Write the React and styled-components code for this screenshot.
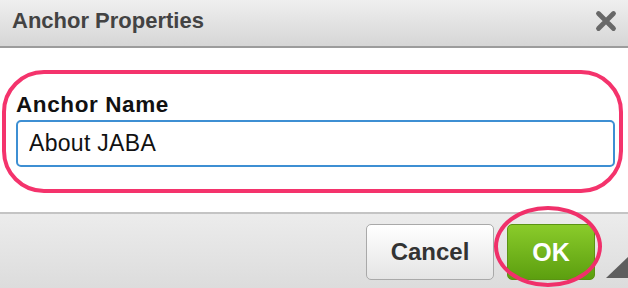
import React from "react";
import styled, { createGlobalStyle } from "styled-components";

const Global = createGlobalStyle`
  html, body {
    margin: 0;
    padding: 0;
    background: #fff;
  }
  body {
    font-family: "Liberation Sans", Arial, sans-serif;
  }
`;

const Dialog = styled.div`
  width: 628px;
  height: 288px;
  display: flex;
  flex-direction: column;
  overflow: hidden;
  position: relative;
  background: #fff;
`;

const Header = styled.div`
  height: 48px;
  flex-shrink: 0;
  display: flex;
  align-items: center;
  justify-content: space-between;
  padding: 0 10px 4px 12px;
  box-sizing: border-box;
  background: linear-gradient(#efefef, #d6d6d6);
  border-bottom: 2px solid #9c9c9c;
`;

const Title = styled.h1`
  margin: 0;
  font-size: 22px;
  font-weight: bold;
  color: #434343;
`;

const Close = styled.button`
  border: none;
  background: none;
  padding: 0;
  width: 24px;
  height: 24px;
  display: flex;
  align-items: center;
  justify-content: center;
  cursor: pointer;
`;

const Body = styled.div`
  flex: 1;
  padding: 22px 5px 17px 2px;
`;

const Highlight = styled.div`
  border: 4px solid #f4336c;
  border-radius: 42px;
  padding: 18px 4px 22px 10px;
`;

const Label = styled.label`
  display: block;
  font-size: 22.5px;
  line-height: 26px;
  font-weight: bold;
  letter-spacing: 0.6px;
  color: #111;
  margin-bottom: 2px;
`;

const Input = styled.input`
  display: block;
  width: 100%;
  height: 47px;
  box-sizing: border-box;
  border: 2px solid #3d8fd3;
  border-radius: 5px;
  padding: 0 11px;
  font-family: "Liberation Sans", Arial, sans-serif;
  font-size: 23px;
  letter-spacing: 0.3px;
  color: #111;
  outline: none;
`;

const Footer = styled.div`
  height: 76px;
  flex-shrink: 0;
  box-sizing: border-box;
  border-top: 2px solid #c4c4c4;
  background: linear-gradient(#ececec, #dcdcdc);
  display: flex;
  justify-content: flex-end;
  align-items: flex-start;
  gap: 13px;
  padding: 10px 33px 0 0;
`;

const Button = styled.button`
  height: 56px;
  width: ${(p) => p.$w}px;
  box-sizing: border-box;
  border-radius: 5px;
  font-family: "Liberation Sans", Arial, sans-serif;
  font-size: ${(p) => (p.$primary ? 25 : 24)}px;
  font-weight: bold;
  cursor: pointer;
  position: relative;
  color: ${(p) => (p.$primary ? "#fff" : "#333")};
  border: 1px solid ${(p) => (p.$primary ? "#5b9314" : "#a9a9a9")};
  background: ${(p) =>
    p.$primary
      ? "linear-gradient(#8acb2a, #5c9f0f)"
      : "linear-gradient(#ffffff, #e4e4e4)"};
`;

const Circle = styled.span`
  position: absolute;
  left: -14px;
  top: -19px;
  width: 108px;
  height: 81px;
  box-sizing: border-box;
  border: 4px solid #f0306a;
  border-radius: 50%;
  pointer-events: none;
`;

const Grip = styled.svg`
  position: absolute;
  right: 0;
  bottom: 10px;
`;

export default function App() {
  return (
    <>
      <Global />
      <Dialog>
        <Header>
          <Title>Anchor Properties</Title>
          <Close aria-label="Close">
            <svg width="22" height="22" viewBox="0 0 22 22">
              <path
                d="M3.5 3.5 L18.5 18.5 M18.5 3.5 L3.5 18.5"
                stroke="#686868"
                strokeWidth="4.8"
                strokeLinecap="round"
              />
            </svg>
          </Close>
        </Header>
        <Body>
          <Highlight>
            <Label>Anchor Name</Label>
            <Input defaultValue="About JABA" />
          </Highlight>
        </Body>
        <Footer>
          <Button $w={128}>Cancel</Button>
          <Button $w={88} $primary>
            OK
            <Circle />
          </Button>
        </Footer>
        <Grip width="22" height="21" viewBox="0 0 22 21">
          <polygon points="22,0 22,21 0,21" fill="#5e5e5e" />
        </Grip>
      </Dialog>
    </>
  );
}
